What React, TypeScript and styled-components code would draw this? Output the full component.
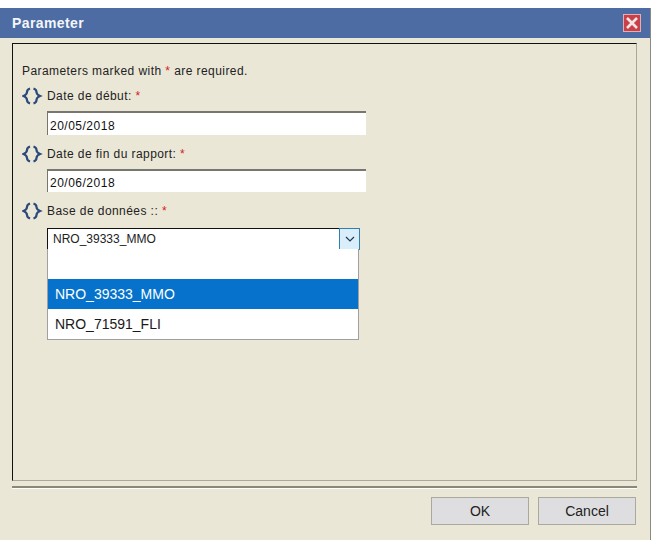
import { createGlobalStyle } from "styled-components";
import styled from "styled-components";

const GlobalStyle = createGlobalStyle`
  html, body {
    margin: 0;
    padding: 0;
    background: #ffffff;
    font-family: "Liberation Sans", Arial, sans-serif;
  }
`

const Dialog = styled.div`
  width: 651px;
  height: 532px;
  margin-top: 8px;
  box-sizing: border-box;
  display: flex;
  flex-direction: column;
  background: #ebe7d7;
  border-right: 1px solid #8a8a84;
`

const TitleBar = styled.div`
  height: 30px;
  flex: none;
  display: flex;
  align-items: center;
  justify-content: space-between;
  padding: 0 9px 0 12px;
  background: #4c6ca3;
  color: #f4f6fa;
  font-size: 14px;
  font-weight: bold;
  letter-spacing: 0.4px;
`

const CloseBtn = styled.div`
  width: 16px;
  height: 16px;
  display: flex;
  align-items: center;
  justify-content: center;
  background: #c9404a;
  border: 1px solid #e6aeb0;
`

const Panel = styled.div`
  position: relative;
  flex: none;
  height: 438px;
  margin: 5px 13px 0 12px;
  padding: 20px 9px 0;
  box-sizing: border-box;
  border-top: 1px solid #111111;
  border-left: 1px solid #111111;
  border-right: 1px solid #aaa89c;
  border-bottom: 1px solid #aaa89c;
  color: #222222;
  font-size: 12px;
`

const Intro = styled.div`
  height: 15px;
  line-height: 15px;
  margin-bottom: 6px;
  letter-spacing: 0.43px;
`

const Star = styled.span`
  color: #d42020;
`

const Field = styled.div`
  position: relative;
  display: flex;
  flex-direction: column;
`

const FieldLabel = styled.div`
  display: flex;
  align-items: center;
  gap: 4px;
  height: 20px;
  margin-top: 1px;
  letter-spacing: 0.43px;
`

const DateInput = styled.div<{ $height: number }>`
  width: 319px;
  height: ${p => p.$height}px;
  margin: 5px 0 8px 25px;
  padding: 3px 0 0 2px;
  box-sizing: border-box;
  display: flex;
  align-items: center;
  background: #ffffff;
  border-top: 2px solid #777770;
  border-left: 1px solid #777770;
  color: #111111;
  letter-spacing: 0.5px;
`

const SelectBox = styled.div`
  width: 293px;
  height: 22px;
  margin: 7px 0 0 25px;
  padding-left: 5px;
  box-sizing: border-box;
  position: relative;
  display: flex;
  align-items: center;
  background: #ffffff;
  border: 1px solid #111111;
  color: #222222;
  font-size: 12px;
`

const SelectArrow = styled.div`
  position: absolute;
  right: -21px;
  top: -1px;
  width: 21px;
  height: 22px;
  display: flex;
  align-items: center;
  justify-content: center;
  background: #d9edfb;
  border: 1px solid #2f7fb5;
  box-sizing: border-box;
`

const OptionList = styled.div`
  position: absolute;
  left: 25px;
  top: 49px;
  width: 310px;
  background: #ffffff;
  border: 1px solid #a0a0a0;
  border-top: none;
  font-size: 14px;
`

const Option = styled.div<{ $active?: boolean }>`
  height: 30px;
  padding-left: 7px;
  display: flex;
  align-items: center;
  background: ${p => (p.$active ? "#0672cb" : "#ffffff")};
  color: ${p => (p.$active ? "#ffffff" : "#1a1a1a")};
`

const Separator = styled.div`
  flex: none;
  height: 2px;
  margin: 5px 13px 0 12px;
  background: #8a8878;
  border-bottom: 1px solid #ffffff;
`

const Footer = styled.div`
  flex: none;
  display: flex;
  justify-content: flex-end;
  gap: 9px;
  margin: 8px 14px 0 0;
`

const Button = styled.div`
  width: 98px;
  height: 28px;
  box-sizing: border-box;
  display: flex;
  align-items: center;
  justify-content: center;
  background: #dedee0;
  border: 1px solid #a9a99f;
  color: #222222;
  font-size: 14px;
`

const Braces = () => (
  <svg width="21" height="18" viewBox="0 0 21 18" fill="none" stroke="#2c4a7c" strokeWidth="2.2">
    <path d="M8 1.5 Q5 2.5 5 5 Q5 7.5 1.5 9 Q5 10.5 5 13 Q5 15.5 8 16.5" />
    <path d="M11.5 1.5 Q14.5 2.5 14.5 5 Q14.5 7.5 18 9 Q14.5 10.5 14.5 13 Q14.5 15.5 11.5 16.5" />
  </svg>
)

const Label = ({ text }: { text: string }) => (
  <FieldLabel>
    <Braces />
    <span>{text} <Star>*</Star></span>
  </FieldLabel>
)

export default function App() {
  return (
    <>
      <GlobalStyle />
      <Dialog>
        <TitleBar>
          Parameter
          <CloseBtn>
            <svg width="12" height="12" viewBox="0 0 12 12" stroke="#f6e6e2" strokeWidth="2.6">
              <path d="M1 1 L11 11 M11 1 L1 11" />
            </svg>
          </CloseBtn>
        </TitleBar>
        <Panel>
          <Intro>Parameters marked with <Star>*</Star> are required.</Intro>
          <Field>
            <Label text="Date de début:" />
            <DateInput $height={24}>20/05/2018</DateInput>
          </Field>
          <Field>
            <Label text="Date de fin du rapport:" />
            <DateInput $height={23}>20/06/2018</DateInput>
          </Field>
          <Field>
            <Label text="Base de données ::" />
            <SelectBox>
              NRO_39333_MMO
              <SelectArrow>
                <svg width="10" height="6" viewBox="0 0 10 6" fill="none" stroke="#1e3a55" strokeWidth="1.2">
                  <path d="M1 1 L5 5 L9 1" />
                </svg>
              </SelectArrow>
            </SelectBox>
            <OptionList>
              <Option />
              <Option $active>NRO_39333_MMO</Option>
              <Option>NRO_71591_FLI</Option>
            </OptionList>
          </Field>
        </Panel>
        <Separator />
        <Footer>
          <Button>OK</Button>
          <Button>Cancel</Button>
        </Footer>
      </Dialog>
    </>
  )
}
